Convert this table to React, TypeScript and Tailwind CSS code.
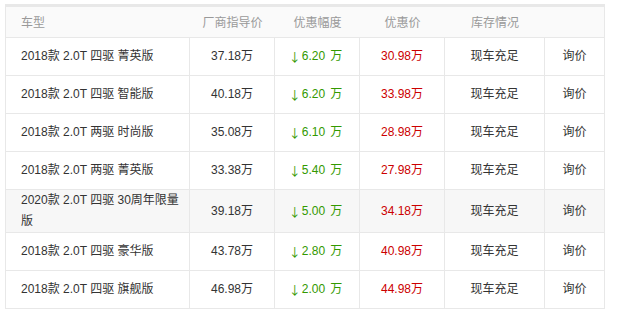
const ROWS = [
  { name: "2018款 2.0T 四驱 菁英版", guide: "37.18万", off: "6.20", price: "30.98万" },
  { name: "2018款 2.0T 四驱 智能版", guide: "40.18万", off: "6.20", price: "33.98万" },
  { name: "2018款 2.0T 两驱 时尚版", guide: "35.08万", off: "6.10", price: "28.98万" },
  { name: "2018款 2.0T 两驱 菁英版", guide: "33.38万", off: "5.40", price: "27.98万" },
  { name: "2020款 2.0T 四驱 30周年限量版", guide: "39.18万", off: "5.00", price: "34.18万", hover: true },
  { name: "2018款 2.0T 四驱 豪华版", guide: "43.78万", off: "2.80", price: "40.98万" },
  { name: "2018款 2.0T 四驱 旗舰版", guide: "46.98万", off: "2.00", price: "44.98万" },
];

const font = { fontFamily: '"Liberation Sans", "Noto Sans CJK SC", sans-serif' };

export default function App() {
  return (
    <div className="h-[318px] w-[623px] bg-white pt-[4px] pl-[5px]" style={font}>
      <div className="w-[600px] border-x border-[#e8e8e8] text-[12px]">
        {/* Header */}
        <div className="flex h-[34px] items-center border-t-[3px] border-b border-[#e8e8e8] bg-[#fafafa] pt-[1px] text-[#999]">
          <div className="w-[184px] pl-[15px]">车型</div>
          <div className="w-[85px] text-center">厂商指导价</div>
          <div className="w-[85px] text-center">优惠幅度</div>
          <div className="w-[85px] text-center">优惠价</div>
          <div className="w-[100px] text-center">库存情况</div>
          <div className="w-[59px]" />
        </div>

        {/* Body */}
        {ROWS.map((r) => (
          <div
            key={r.name}
            className={`flex min-h-[38px] border-b border-[#e8e8e8] leading-[21px] text-[#333] ${
              r.hover ? "bg-[#f7f7f7]" : "bg-white"
            }`}
          >
            <div className="flex w-[184px] items-center border-r border-[#e8e8e8] pl-[15px] pr-[5px]">
              {r.name}
            </div>
            <div className="flex w-[85px] items-center justify-center border-r border-[#e8e8e8]">
              {r.guide}
            </div>
            <div className="flex w-[85px] items-center justify-center border-r border-[#e8e8e8] text-[#339900]">
              <span
                className="mr-[4px] inline-flex w-[6px] justify-center"
                style={{ fontFamily: '"Noto Sans CJK SC", sans-serif' }}
              >
                ↓
              </span>
              {r.off}
              <span className="ml-[5px]">万</span>
            </div>
            <div className="flex w-[85px] items-center justify-center border-r border-[#e8e8e8] text-[#cc0000]">
              {r.price}
            </div>
            <div className="flex w-[100px] items-center justify-center border-r border-[#e8e8e8]">
              现车充足
            </div>
            <div className="flex w-[59px] items-center justify-center">询价</div>
          </div>
        ))}
      </div>
    </div>
  );
}
